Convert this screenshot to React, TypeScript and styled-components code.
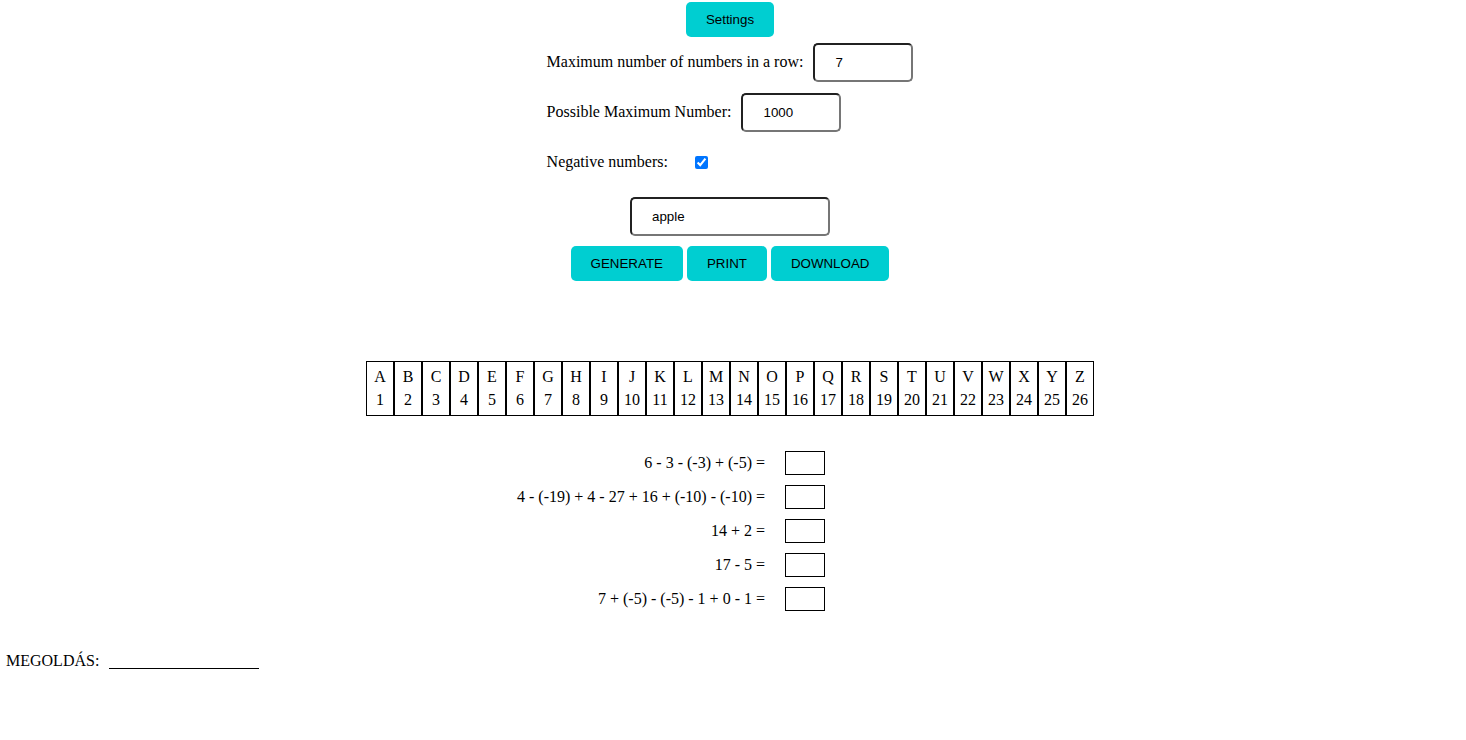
import React, { useState } from 'react';
import styled, { createGlobalStyle } from 'styled-components';

const GlobalStyle = createGlobalStyle`
  body {
    margin: 0;
    background: #fff;
    color: #000;
    font-family: "Liberation Serif", "Times New Roman", serif;
    font-size: 16px;
    line-height: 18px;
  }
`;

const Page = styled.main`
  display: flex;
  flex-direction: column;
  align-items: center;
  padding: 2px 12px 0 6px;
`;

const Button = styled.button`
  padding: 10px 20px;
  border: 0;
  border-radius: 5px;
  background: #00ced1;
  color: #000;
  font-family: "Liberation Sans", Arial, sans-serif;
  line-height: 15px;
  cursor: pointer;
`;

const Settings = styled.section`
  display: flex;
  flex-direction: column;
  margin-bottom: 10px;
`;

const Setting = styled.div`
  display: flex;
  align-items: center;
  gap: 10px;
  height: 50px;
`;

const Field = styled.input<{ $wide?: boolean }>`
  box-sizing: border-box;
  width: ${({ $wide }) => ($wide ? 200 : 100)}px;
  height: 39px;
  padding: 10px 20px;
  border: 2px inset #767676;
  border-radius: 5px;
  background: #fff;
  color: #000;
  font-family: "Liberation Sans", Arial, sans-serif;
`;

const Checkbox = styled.input`
  width: 13px;
  height: 13px;
  margin: 0 0 0 17px;
`;

const Actions = styled.div`
  display: flex;
  gap: 4px;
  margin: 10px 0 80px;
`;

const KeyTable = styled.table`
  table-layout: fixed;
  border-spacing: 0;
  text-align: center;
`;

const Letter = styled.th`
  box-sizing: border-box;
  width: 28px;
  padding: 6px 0 2px;
  border: solid #000;
  border-width: 1px 1px 0;
  font-weight: 400;
`;

const Position = styled.td`
  box-sizing: border-box;
  width: 28px;
  padding: 3px 0 6px;
  border: solid #000;
  border-width: 0 1px 1px;
`;

const Exercises = styled.div`
  display: flex;
  flex-direction: column;
  gap: 10px;
  width: 430px;
  margin-top: 35px;
`;

const Exercise = styled.label`
  display: grid;
  grid-template-columns: 250px 40px;
  column-gap: 20px;
  align-items: center;
  text-align: right;
  white-space: nowrap;
`;

const Answer = styled.input`
  box-sizing: border-box;
  width: 40px;
  height: 24px;
  padding: 0;
  border: 1px solid #000;
  border-radius: 0;
  text-align: center;
`;

const Solution = styled.label`
  display: flex;
  align-items: flex-end;
  gap: 10px;
  align-self: flex-start;
  margin-top: 40px;
  line-height: 16px;
`;

const SolutionLine = styled.input`
  box-sizing: border-box;
  width: 150px;
  height: 18px;
  padding: 0;
  border: 0;
  border-bottom: 1px solid #000;
  background: transparent;
`;

const letters = 'ABCDEFGHIJKLMNOPQRSTUVWXYZ'.split('');

const exercises = [
  '6 - 3 - (-3) + (-5) =',
  '4 - (-19) + 4 - 27 + 16 + (-10) - (-10) =',
  '14 + 2 =',
  '17 - 5 =',
  '7 + (-5) - (-5) - 1 + 0 - 1 =',
];

export default function App() {
  const [open, setOpen] = useState(true);

  return (
    <>
      <GlobalStyle />
      <Page>
        <Button type="button" aria-expanded={open} onClick={() => setOpen(!open)}>
          Settings
        </Button>
        {open && (
          <Settings>
            <Setting>
              <label htmlFor="row-length">Maximum number of numbers in a row:</label>
              <Field id="row-length" defaultValue="7" />
            </Setting>
            <Setting>
              <label htmlFor="max-number">Possible Maximum Number:</label>
              <Field id="max-number" defaultValue="1000" />
            </Setting>
            <Setting>
              <label htmlFor="negatives">Negative numbers:</label>
              <Checkbox id="negatives" type="checkbox" defaultChecked />
            </Setting>
          </Settings>
        )}
        <Field $wide aria-label="Solution word" defaultValue="apple" />
        <Actions>
          <Button type="button">GENERATE</Button>
          <Button type="button">PRINT</Button>
          <Button type="button">DOWNLOAD</Button>
        </Actions>
        <KeyTable>
          <thead>
            <tr>
              {letters.map((letter) => (
                <Letter key={letter} scope="col">{letter}</Letter>
              ))}
            </tr>
          </thead>
          <tbody>
            <tr>
              {letters.map((letter, i) => (
                <Position key={letter}>{i + 1}</Position>
              ))}
            </tr>
          </tbody>
        </KeyTable>
        <Exercises>
          {exercises.map((text) => (
            <Exercise key={text}>
              <span>{text}</span>
              <Answer />
            </Exercise>
          ))}
        </Exercises>
        <Solution>
          MEGOLDÁS:
          <SolutionLine />
        </Solution>
      </Page>
    </>
  );
}
